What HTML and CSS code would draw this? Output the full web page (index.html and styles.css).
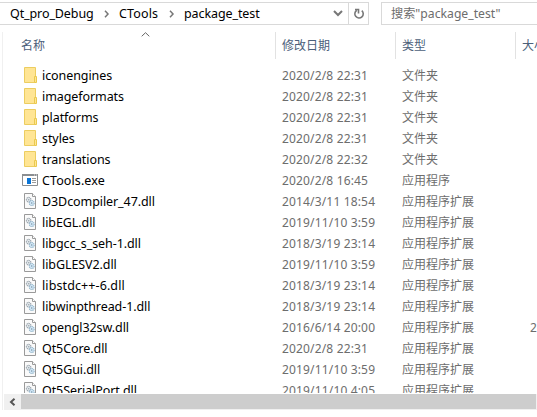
FILE: index.html
```html
<!DOCTYPE html>
<html lang="zh-CN">
<head>
<meta charset="utf-8">
<title>package_test</title>
<link rel="stylesheet" href="styles.css">
</head>
<body>
<svg class="defs" width="0" height="0">
  <symbol id="folder" viewBox="0 0 16 16">
    <path d="M2.500.5h11v15h-11z" fill="#ffe594" stroke="#eccd60"/>
    <path d="M12.500 9.500h2v6h-2z" fill="#ffe594" stroke="#eac94e"/>
  </symbol>
  <symbol id="exe" viewBox="0 0 16 16">
    <path d="M.5 2.500h15v11H.5z" fill="#fff" stroke="#8b8e91"/>
    <path d="M0 2h16v2H0z" fill="#8b8e91"/>
    <path d="M12 3h1M14 3h1" stroke="#e4e4e4"/>
    <path d="M5 6h4v6H5z" fill="#0a75d7"/>
    <path d="M10 6.500h4M10 8.500h4M10 10.500h4" stroke="#9b9b9b"/>
  </symbol>
  <symbol id="dll" viewBox="0 0 16 16">
    <path d="M2.500.5h8l3 3v12h-11z" fill="#fafafa" stroke="#9a9a9a"/>
    <path d="M10.500.5v3h3" fill="#fff" stroke="#9a9a9a"/>
    <circle cx="6.700" cy="6.700" r="2.300" fill="#e5eaee" stroke="#98a2aa" stroke-width="1.100" stroke-dasharray="1.300 .6"/>
    <circle cx="6.700" cy="6.700" r=".8" fill="#9aa6ae"/>
    <circle cx="9.700" cy="10" r="2.500" fill="#d4e8f6" stroke="#96b7cc" stroke-width="1.100" stroke-dasharray="1.300 .6"/>
    <circle cx="9.700" cy="10" r=".8" fill="#7897ab"/>
  </symbol>
</svg>
<div class="window">
  <div class="toolbar">
    <div class="address">
      <span class="crumb c1">Qt_pro_Debug</span>
      <svg class="sep" width="6" height="8"><path d="M1 .8l3 3.200-3 3.200"/></svg>
      <span class="crumb c2">CTools</span>
      <svg class="sep" width="6" height="8"><path d="M1 .8l3 3.200-3 3.200"/></svg>
      <span class="crumb c3">package_test</span>
      <svg class="drop" width="10" height="7"><path d="M1 1l4 4 4-4"/></svg>
      <div class="refresh"><svg width="12" height="12"><path d="M3.800 2.200A4.200 4.200 0 1 0 8.800 2.600"/><path d="M2 1.500h3.500v4"/></svg></div>
    </div>
    <div class="search">搜索"package_test"</div>
  </div>
  <div class="list">
    <div class="head">
      <div class="hname">名称<svg class="sort" width="9" height="5"><path d="M.7 4.300l3.800-3.600 3.800 3.600"/></svg></div>
      <div>修改日期</div><div>类型</div><div>大小</div>
    </div>
    <div class="rows">
      <div class="row"><svg><use href="#folder"/></svg><b>iconengines</b><i>2020/2/8 22:31</i><i>文件夹</i></div>
      <div class="row"><svg><use href="#folder"/></svg><b>imageformats</b><i>2020/2/8 22:31</i><i>文件夹</i></div>
      <div class="row"><svg><use href="#folder"/></svg><b>platforms</b><i>2020/2/8 22:31</i><i>文件夹</i></div>
      <div class="row"><svg><use href="#folder"/></svg><b>styles</b><i>2020/2/8 22:31</i><i>文件夹</i></div>
      <div class="row"><svg><use href="#folder"/></svg><b>translations</b><i>2020/2/8 22:32</i><i>文件夹</i></div>
      <div class="row"><svg><use href="#exe"/></svg><b class="wide">CTools.exe</b><i>2020/2/8 16:45</i><i>应用程序</i></div>
      <div class="row"><svg><use href="#dll"/></svg><b>D3Dcompiler_47.dll</b><i>2014/3/11 18:54</i><i>应用程序扩展</i></div>
      <div class="row"><svg><use href="#dll"/></svg><b>libEGL.dll</b><i>2019/11/10 3:59</i><i>应用程序扩展</i></div>
      <div class="row"><svg><use href="#dll"/></svg><b>libgcc_s_seh-1.dll</b><i>2018/3/19 23:14</i><i>应用程序扩展</i></div>
      <div class="row"><svg><use href="#dll"/></svg><b>libGLESV2.dll</b><i>2019/11/10 3:59</i><i>应用程序扩展</i></div>
      <div class="row"><svg><use href="#dll"/></svg><b class="wide">libstdc++-6.dll</b><i>2018/3/19 23:14</i><i>应用程序扩展</i></div>
      <div class="row"><svg><use href="#dll"/></svg><b>libwinpthread-1.dll</b><i>2018/3/19 23:14</i><i>应用程序扩展</i></div>
      <div class="row"><svg><use href="#dll"/></svg><b>opengl32sw.dll</b><i>2016/6/14 20:00</i><i>应用程序扩展</i><i class="size">2</i></div>
      <div class="row"><svg><use href="#dll"/></svg><b>Qt5Core.dll</b><i>2020/2/8 22:31</i><i>应用程序扩展</i></div>
      <div class="row"><svg><use href="#dll"/></svg><b>Qt5Gui.dll</b><i>2019/11/10 3:59</i><i>应用程序扩展</i></div>
      <div class="row"><svg><use href="#dll"/></svg><b>Qt5SerialPort.dll</b><i>2019/11/10 4:05</i><i>应用程序扩展</i></div>
    </div>
    <div class="scroll"><div class="arrow"><svg width="7" height="8"><path d="M5.500 .8L2 4l3.500 3.200"/></svg></div><div class="thumb"></div></div>
  </div>
</div>
</body>
</html>
```
FILE: styles.css
```css
* { box-sizing: border-box; }
body { margin: 0; background: #fff; overflow: hidden; font: 12px/21px "Noto Sans", "Noto Sans CJK SC", sans-serif; color: #000; }
svg { display: block; flex: none; fill: none; }
.defs { position: absolute; }
.window { width: 537px; height: 417px; overflow: hidden; }
.toolbar { display: flex; height: 25px; padding-top: 2px; }
.address { display: flex; flex: none; align-items: center; width: 369px; height: 23px; border: 1px solid #d9d9d9; border-left: 0; padding-left: 10px; }
.crumb { flex: none; white-space: nowrap; font-size: 12.5px; letter-spacing: -.1px; }
.c1 { width: 94px; }
.c2 { width: 50px; letter-spacing: .15px; }
.c3 { width: 149px; }
.sep { margin-right: 9px; stroke: #777; stroke-width: 1.5; }
.drop { stroke: #777; stroke-width: 2; }
.refresh { display: flex; align-items: center; justify-content: center; width: 20px; height: 21px; margin-left: auto; border-left: 1px solid #d9d9d9; stroke: #777; stroke-width: 1.6; }
.search { width: 170px; height: 23px; flex: none; margin-left: 12px; padding-left: 9px; border: 1px solid #d9d9d9; color: #6d6d6d; white-space: nowrap; font-size: 12.2px; }
.list { margin: 7px 0 0 2px; height: 378px; border-left: 1px solid #f0f0f0; }
.head { display: grid; grid-template-columns: 273px 120px 120px 60px; height: 27px; color: #4c607a; line-height: 27px; }
.head div { padding-left: 6px; border-right: 1px solid #e2e2e2; white-space: nowrap; }
.head .hname { position: relative; padding-left: 18px; }
.sort { position: absolute; left: 138px; top: 0; stroke: #666; }
.rows { height: 334px; padding-top: 6px; overflow: hidden; }
.row { display: grid; grid-template-columns: 18px 240px 120px 120px 30px; align-items: center; height: 21px; padding-left: 19px; white-space: nowrap; }
.row svg { width: 16px; height: 16px; margin-bottom: 1px; }
.row b { font-weight: 400; font-size: 12.5px; padding-left: 2px; letter-spacing: -.08px; }
.row .wide { letter-spacing: .1px; }
.row i { font-style: normal; color: #6d6d6d; padding-left: 2px; letter-spacing: .16px; }
.row i:nth-child(4) { letter-spacing: 0; }
.row .size { padding-left: 10px; }
.scroll { display: flex; height: 16px; background: #f0f0f0; margin: 1px 0 0 1px; }
.arrow { display: flex; align-items: center; justify-content: center; width: 17px; stroke: #555; stroke-width: 2; }
.thumb { width: 515px; height: 15px; background: #cdcdcd; }
```
